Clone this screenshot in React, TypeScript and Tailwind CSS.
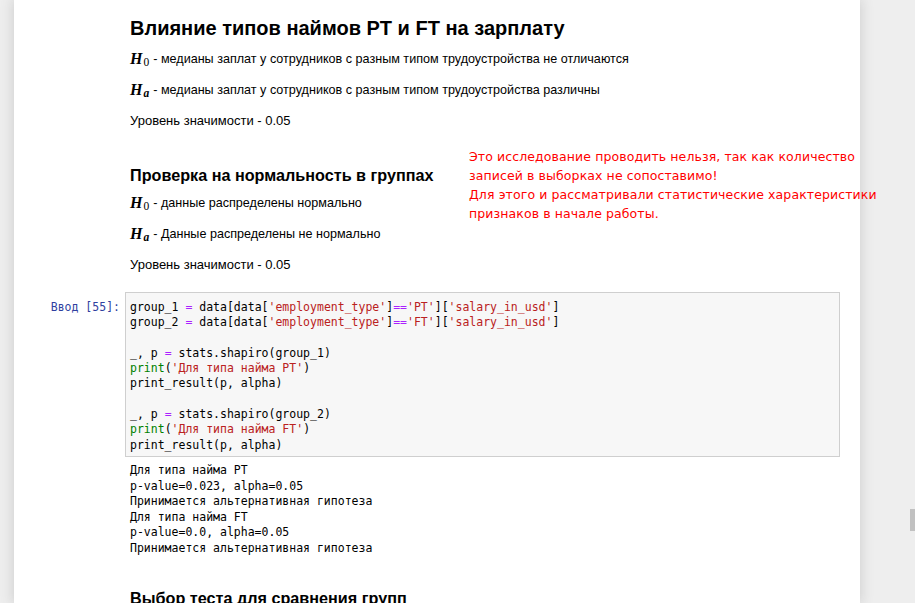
import React from 'react';

const mono = { fontFamily: '"DejaVu Sans Mono", "Liberation Mono", monospace' };

function Op({ children }: { children: React.ReactNode }) {
  return <span className="text-[#aa22ff]">{children}</span>;
}
function Str({ children }: { children: React.ReactNode }) {
  return <span className="text-[#ba2121]">{children}</span>;
}
function Bi({ children }: { children: React.ReactNode }) {
  return <span className="text-[#008000]">{children}</span>;
}

function Hyp({ sub, text }: { sub: string; text: string }) {
  return (
    <p className="flex items-center h-[20px] leading-[20px] text-[12.6px] text-black">
      <span className="font-['Liberation_Serif',serif] italic font-bold text-[16px] mr-[1px]">H</span>
      <span
        className={`font-['Liberation_Serif',serif] text-[11.5px] relative top-[3px] mr-[4px] ${sub === 'a' ? 'italic font-bold' : ''}`}
      >
        {sub}
      </span>
      <span>{text}</span>
    </p>
  );
}

export default function App() {
  return (
    <div className="relative h-screen overflow-hidden bg-[#eeeeee] font-['Liberation_Sans',Arial,sans-serif]">
      <div className="ml-[14px] w-[846px] h-full bg-white shadow-[0_0_12px_1px_rgba(87,87,87,0.2)]">
        {/* Markdown: влияние типов найма */}
        <div className="pl-[116px]">
          <h2 className="pt-[14px] h-[42px] leading-[28px] text-[20px] font-bold text-black">
            Влияние типов наймов PT и FT на зарплату
          </h2>
          <div className="mt-[7px]">
            <Hyp sub="0" text="- медианы заплат у сотрудников с разным типом трудоустройства не отличаются" />
          </div>
          <div className="mt-[11px]">
            <Hyp sub="a" text="- медианы заплат у сотрудников с разным типом трудоустройства различны" />
          </div>
          <p className="mt-[11px] h-[20px] leading-[20px] text-[13px] text-black">Уровень значимости - 0.05</p>

          {/* проверка на нормальность + красная заметка */}
          <div className="flex mt-[16px]">
            <div className="w-[339px] shrink-0 pt-[16px]">
              <h3 className="h-[24px] leading-[24px] text-[16.2px] font-bold text-black whitespace-nowrap">
                Проверка на нормальность в группах
              </h3>
              <div className="mt-[6px]">
                <Hyp sub="0" text="- данные распределены нормально" />
              </div>
              <div className="mt-[11px]">
                <Hyp sub="a" text="- Данные распределены не нормально" />
              </div>
              <p className="mt-[11px] h-[20px] leading-[20px] text-[13px] text-black">Уровень значимости - 0.05</p>
            </div>
            <p className="whitespace-nowrap text-[#ff0000] text-[12.5px] leading-[19px] font-['DejaVu_Sans',sans-serif] tracking-[0.1px]">
              Это исследование проводить нельзя, так как количество
              <br />
              записей в выборках не сопоставимо!
              <br />
              Для этого и рассматривали статистические характеристики
              <br />
              признаков в начале работы.
            </p>
          </div>
        </div>

        {/* Code cell */}
        <div className="flex mt-[17px] pr-[20px]">
          <div
            className="w-[111px] shrink-0 pr-[5px] text-right text-[11.5px] leading-[15.3px] pt-[8px] text-[#303f9f]"
            style={mono}
          >
            Ввод&nbsp;[55]:
          </div>
          <div
            className="flex-1 border border-[#cfcfcf] bg-[#f7f7f7] px-[4px] pt-[7px] pb-[3px] text-[11.5px] leading-[15.3px] text-black whitespace-pre"
            style={mono}
          >
            <div>
              group_1 <Op>=</Op> data[data[<Str>'employment_type'</Str>]<Op>==</Op><Str>'PT'</Str>][<Str>'salary_in_usd'</Str>]
            </div>
            <div>
              group_2 <Op>=</Op> data[data[<Str>'employment_type'</Str>]<Op>==</Op><Str>'FT'</Str>][<Str>'salary_in_usd'</Str>]
            </div>
            <div>&nbsp;</div>
            <div>
              _, p <Op>=</Op> stats.shapiro(group_1)
            </div>
            <div>
              <Bi>print</Bi>(<Str>'Для типа найма PT'</Str>)
            </div>
            <div>print_result(p, alpha)</div>
            <div>&nbsp;</div>
            <div>
              _, p <Op>=</Op> stats.shapiro(group_2)
            </div>
            <div>
              <Bi>print</Bi>(<Str>'Для типа найма FT'</Str>)
            </div>
            <div>print_result(p, alpha)</div>
          </div>
        </div>

        {/* Output */}
        <div
          className="pl-[116px] mt-[6px] text-[11.5px] leading-[15.6px] text-black whitespace-pre"
          style={mono}
        >
          <div>Для типа найма PT</div>
          <div>p-value=0.023, alpha=0.05</div>
          <div>Принимается альтернативная гипотеза</div>
          <div>Для типа найма FT</div>
          <div>p-value=0.0, alpha=0.05</div>
          <div>Принимается альтернативная гипотеза</div>
        </div>

        <div className="pl-[116px] mt-[29px]">
          <h3 className="h-[24px] leading-[24px] text-[16.2px] font-bold text-black">Выбор теста для сравнения групп</h3>
        </div>
      </div>

      {/* scrollbar thumb */}
      <div className="absolute right-0 top-[509px] w-[5px] h-[22px] bg-[#c1c1c1]" />
    </div>
  );
}
